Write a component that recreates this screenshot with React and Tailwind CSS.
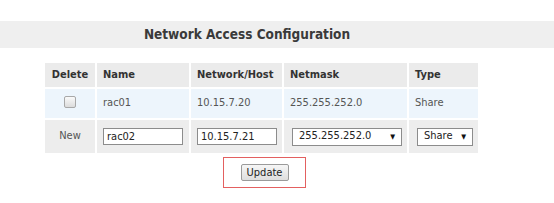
const font = { fontFamily: '"DejaVu Sans Condensed", "DejaVu Sans", Verdana, sans-serif' };

function Arrow() {
  return (
    <span className="pointer-events-none absolute right-[6px] top-1/2 -translate-y-1/2 text-[7px] leading-none text-[#111]">
      ▼
    </span>
  );
}

export default function App() {
  return (
    <div className="w-[554px] h-[203px] bg-white text-[11px] text-[#555] [font-stretch:condensed]" style={font}>
      <div className="pt-[21px]">
        <div className="h-[27px] bg-[#efefef] flex items-center justify-center pr-[60px]">
          <h1 className="text-[13.5px] font-bold text-[#3a3a3a] [font-stretch:condensed]">Network Access Configuration</h1>
        </div>
      </div>

      <div className="ml-[43px] mt-[13px]">
        <table className="table-fixed border-separate border-spacing-[2px] w-[435px]">
          <colgroup>
            <col className="w-[50px]" />
            <col className="w-[92px]" />
            <col className="w-[91px]" />
            <col className="w-[123px]" />
            <col className="w-[69px]" />
          </colgroup>
          <thead>
            <tr className="h-[24px] bg-[#ebebeb] text-[#333] font-bold">
              <th className="text-center font-bold">Delete</th>
              <th className="text-left pl-[6px] font-bold">Name</th>
              <th className="text-left pl-[6px] font-bold">Network/Host</th>
              <th className="text-left pl-[6px] font-bold">Netmask</th>
              <th className="text-left pl-[6px] font-bold">Type</th>
            </tr>
          </thead>
          <tbody>
            <tr className="h-[29px] bg-[#edf5fc]">
              <td className="text-center align-middle">
                <span className="inline-block w-[12px] h-[12px] mt-[3px] rounded-[2px] border border-[#a8a8a8] bg-gradient-to-b from-[#fafafa] to-[#dcdcdc]" />
              </td>
              <td className="pl-[6px]">rac01</td>
              <td className="pl-[6px]">10.15.7.20</td>
              <td className="pl-[6px]">255.255.252.0</td>
              <td className="pl-[6px]">Share</td>
            </tr>
            <tr className="h-[33px] bg-[#ededed]">
              <td className="text-center">New</td>
              <td className="pl-[6px]">
                <input
                  defaultValue="rac02"
                  className="block w-[80px] h-[17px] border border-[#8c8c8c] bg-white px-[3px] text-[11px] text-[#222] outline-none"
                  style={font}
                />
              </td>
              <td className="pl-[6px]">
                <input
                  defaultValue="10.15.7.21"
                  className="block w-[80px] h-[17px] border border-[#8c8c8c] bg-white px-[3px] text-[11px] text-[#222] outline-none"
                  style={font}
                />
              </td>
              <td className="pl-[8px]">
                <div className="relative w-[110px] h-[18px] border border-[#8c8c8c] bg-white flex items-center pl-[6px] text-[#222]">
                  255.255.252.0
                  <Arrow />
                </div>
              </td>
              <td className="pl-[8px]">
                <div className="relative w-[56px] h-[18px] border border-[#8c8c8c] bg-white flex items-center pl-[6px] text-[#222]">
                  Share
                  <Arrow />
                </div>
              </td>
            </tr>
          </tbody>
        </table>
      </div>

      <div className="ml-[223px] mt-[2px] w-[83px] h-[31px] border border-[#e36060] flex items-center justify-center">
        <button className="w-[48px] h-[17px] border border-[#9a9a9a] rounded-[2px] bg-gradient-to-b from-[#f6f6f6] to-[#dedede] text-[11px] text-[#222] leading-none" style={font}>
          Update
        </button>
      </div>
    </div>
  );
}
